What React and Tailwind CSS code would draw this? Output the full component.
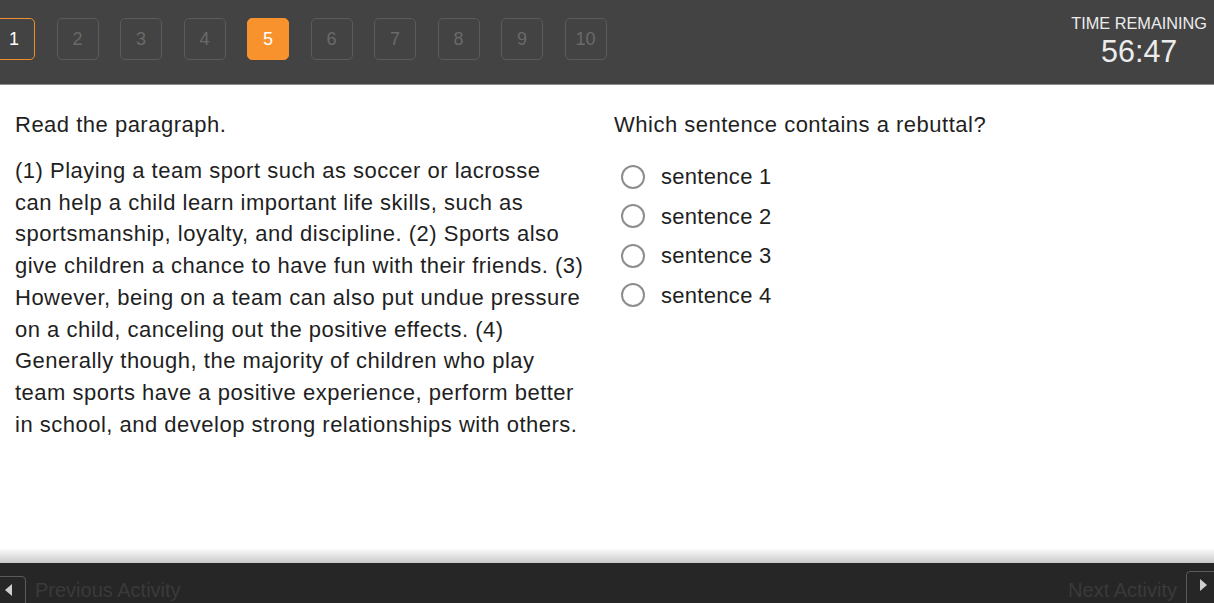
import React, { useState } from 'react';

const questions = [1, 2, 3, 4, 5, 6, 7, 8, 9, 10];
const options = ['sentence 1', 'sentence 2', 'sentence 3', 'sentence 4'];

const lines = [
  '(1) Playing a team sport such as soccer or lacrosse',
  'can help a child learn important life skills, such as',
  'sportsmanship, loyalty, and discipline. (2) Sports also',
  'give children a chance to have fun with their friends. (3)',
  'However, being on a team can also put undue pressure',
  'on a child, canceling out the positive effects. (4)',
  'Generally though, the majority of children who play',
  'team sports have a positive experience, perform better',
  'in school, and develop strong relationships with others.',
];

function NavBox({ n }) {
  let cls = 'border-[#5b5b5b] text-[#6a6a6a]';
  if (n === 1) cls = 'border-[#ef8f2c] text-white';
  if (n === 5) cls = 'border-[#f7922d] bg-[#f7922d] text-white';
  return (
    <div
      className={`w-[42px] h-[42px] shrink-0 rounded-[5px] border flex items-center justify-center text-[18px] ${cls}`}
    >
      {n}
    </div>
  );
}

export default function App() {
  const [selected, setSelected] = useState(null);

  return (
    <div
      className="w-[1214px] h-[603px] overflow-hidden flex flex-col bg-white"
      style={{ fontFamily: '"Liberation Sans", Arial, sans-serif' }}
    >
      {/* header */}
      <div className="h-[85px] shrink-0 bg-[#434343] border-b border-[#8c8c8c] flex justify-between">
        <div className="flex gap-[21.5px] pt-[18px] ml-[-7px]">
          {questions.map((n) => (
            <NavBox key={n} n={n} />
          ))}
        </div>
        <div className="pr-[7px] pt-[13px] flex flex-col items-center text-[#ececec]">
          <div className="text-[16.3px] leading-[21px]">TIME REMAINING</div>
          <div className="text-[30.5px] leading-[34px]">56:47</div>
        </div>
      </div>

      {/* content */}
      <div className="flex-1 flex px-[15px] pt-[27px] gap-[15px] text-[#1f1f1f] text-[22px] tracking-[0.5px]">
        <div className="w-[584px]">
          <p className="leading-[26px] mb-[17px]">Read the paragraph.</p>
          <p className="leading-[31.7px] whitespace-nowrap">
            {lines.map((l, i) => (
              <React.Fragment key={i}>
                {l}
                {i < lines.length - 1 && <br />}
              </React.Fragment>
            ))}
          </p>
        </div>
        <div className="flex-1">
          <p className="leading-[26px] mb-[19px]">Which sentence contains a rebuttal?</p>
          <div className="flex flex-col">
            {options.map((o, i) => (
              <button
                key={o}
                onClick={() => setSelected(i)}
                className="flex items-center h-[39.5px] pl-[7px] text-left"
              >
                <span className="w-[24px] h-[24px] rounded-full border-2 border-[#8e8e8e] flex items-center justify-center">
                  {selected === i && <span className="w-[12px] h-[12px] rounded-full bg-[#555]" />}
                </span>
                <span className="ml-[16px] tracking-[0.3px]">{o}</span>
              </button>
            ))}
          </div>
        </div>
      </div>

      {/* footer shadow */}
      <div className="h-[15px] shrink-0 bg-gradient-to-b from-white to-[#c9c9c9]" />

      {/* footer */}
      <div className="h-[40px] shrink-0 bg-[#262626] flex justify-between items-start pt-[13px]">
        <div className="flex items-start">
          <div className="w-[34px] h-[36px] ml-[-8px] rounded-[4px] border border-[#5a5a5a] flex items-center pl-[12px]">
            <span className="w-0 h-0 border-y-[6px] border-y-transparent border-r-[7px] border-r-[#cfcfcf] mb-[8px]" />
          </div>
          <span className="ml-[9px] text-[20px] text-[#3a3a3a] leading-[24px] mt-[2px]">Previous Activity</span>
        </div>
        <div className="flex items-start">
          <span className="mr-[9px] text-[20px] text-[#3a3a3a] leading-[24px] mt-[2px]">Next Activity</span>
          <div className="w-[36px] h-[36px] mr-[-8px] rounded-[4px] border border-[#5a5a5a] flex items-center pl-[13px] mt-[-5px]">
            <span className="w-0 h-0 border-y-[6px] border-y-transparent border-l-[7px] border-l-[#cfcfcf] mb-[8px]" />
          </div>
        </div>
      </div>
    </div>
  );
}
